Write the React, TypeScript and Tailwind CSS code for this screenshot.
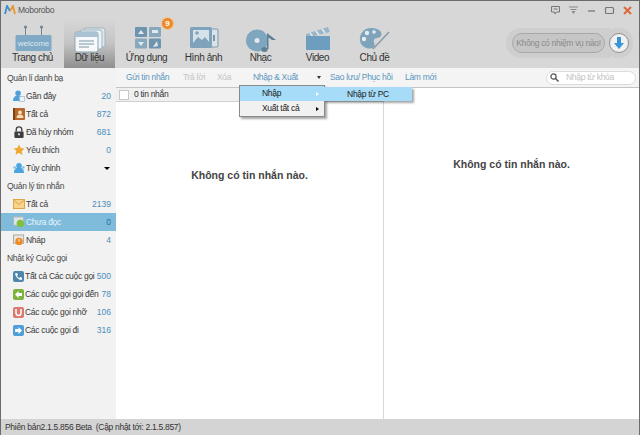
import React from "react";

const NavIcon = ({ name }: { name: string }) => {
  if (name === "home")
    return (
      <svg width="40" height="30" viewBox="0 0 40 30">
        <path d="M12.500 3v9M28.500 3v9" stroke="#6d8796" strokeWidth="1" />
        <circle cx="12.500" cy="4" r="1.600" fill="#6d8796" />
        <circle cx="28.500" cy="4" r="1.600" fill="#6d8796" />
        <rect x="2.500" y="12" width="36" height="16" rx="1.500" fill="#7fa9c4" />
        <text x="20.500" y="23" textAnchor="middle" fontSize="8" fill="#dce9f1" fontFamily="Liberation Sans">welcome</text>
      </svg>
    );
  if (name === "data")
    return (
      <svg width="38" height="30" viewBox="0 0 38 30">
        <rect x="13" y="5" width="21" height="19" rx="2" fill="#dfe8ee" stroke="#9fb3c1" />
        <rect x="9" y="7" width="22" height="19" rx="2" fill="#eef3f6" stroke="#9fb3c1" />
        <rect x="4" y="9" width="23" height="20" rx="2" fill="#f6f8fa" stroke="#8ea5b5" />
        <path d="M4 14v-3a2 2 0 0 1 2-2h19a2 2 0 0 1 2 2v3z" fill="#a9c3d4" />
        <path d="M8 18h15M8 21h15M8 24h10" stroke="#7d96a6" />
      </svg>
    );
  if (name === "apps")
    return (
      <svg width="38" height="30" viewBox="0 0 38 30">
        <rect x="7" y="4" width="12" height="10" rx="1" fill="#6f95ae" />
        <rect x="21" y="4" width="12" height="10" rx="1" fill="#88a8bd" />
        <rect x="7" y="15.500" width="12" height="10" rx="1" fill="#88a8bd" />
        <rect x="21" y="15.500" width="12" height="10" rx="1" fill="#6f95ae" />
        <path d="M10 11l3-4 3 4zM24 7h6v3h-6zM10 19h6l-3 4zM25 24l4-6 1 5z" fill="#dfe9ef" />
      </svg>
    );
  if (name === "photo")
    return (
      <svg width="38" height="30" viewBox="0 0 38 30">
        <rect x="25" y="6" width="8" height="18" rx="1" fill="#d9e2e8" stroke="#7f9bae" />
        <rect x="5" y="4" width="22" height="21" rx="1.500" fill="#7fa3bb" />
        <rect x="8" y="7" width="16" height="15" fill="#d6e2ea" />
        <path d="M8 20l5-6 4 3 3-3 4 5v3H8z" fill="#7fa3bb" />
        <circle cx="12" cy="10" r="1.800" fill="#7fa3bb" />
        <path d="M29 12v6" stroke="#5f7f93" strokeWidth="1.500" />
      </svg>
    );
  if (name === "music")
    return (
      <svg width="38" height="30" viewBox="0 0 38 30">
        <circle cx="15" cy="17.500" r="11" fill="#7fa6bf" />
        <circle cx="15" cy="17.500" r="2.500" fill="#e2eaef" />
        <ellipse cx="22.500" cy="26.500" rx="3.200" ry="2.500" fill="#5f7f93" />
        <path d="M25 26V10l9 7-4 0-3.500-2.500V26z" fill="#5f7f93" />
      </svg>
    );
  if (name === "video")
    return (
      <svg width="38" height="30" viewBox="0 0 38 30">
        <path d="M7 11L29 4l2 5-24 6z" fill="#9ab6c8" />
        <path d="M11 10l3 4M17 8l3 4M23 6l3 4" stroke="#e5ecf0" strokeWidth="1.500" />
        <rect x="7" y="13" width="24" height="14" fill="#6d9ec0" />
      </svg>
    );
  return (
    <svg width="38" height="30" viewBox="0 0 38 30">
      <path d="M15 5c8 0 12 4 10 8-2 3-6 1-7 4-1 3 2 4 0 7-3 3-12 2-14-6C3 11 8 5 15 5z" fill="#7fa3bb" />
      <circle cx="11" cy="10" r="2.200" fill="#e4ecf1" />
      <circle cx="18" cy="9" r="1.800" fill="#e4ecf1" />
      <circle cx="8" cy="16" r="2.200" fill="#e4ecf1" />
      <path d="M17 26L33 9" stroke="#8b9aa3" strokeWidth="1.500" />
    </svg>
  );
};

const navItems = [
  { label: "Trang chủ", icon: "home" },
  { label: "Dữ liệu", icon: "data", active: true },
  { label: "Ứng dụng", icon: "apps", badge: true },
  { label: "Hình ảnh", icon: "photo" },
  { label: "Nhạc", icon: "music" },
  { label: "Video", icon: "video" },
  { label: "Chủ đề", icon: "theme" },
];

const RowIcon = ({ kind }: { kind: string }) => {
  const box = "w-[11px] h-[11px] shrink-0 rounded-[2px] flex items-center justify-center";
  switch (kind) {
    case "recent":
      return (
        <svg width="12" height="12" viewBox="0 0 13 13" className="shrink-0">
          <circle cx="5.500" cy="3.500" r="3" fill="#4f9fdc" />
          <path d="M0 12c0-4 2-6 5.500-6S11 8 11 12z" fill="#4f9fdc" />
          <rect x="7" y="7" width="5.500" height="5.500" fill="#eef4f8" stroke="#8fb2c9" strokeWidth=".7" />
        </svg>
      );
    case "book":
      return (
        <svg width="12" height="12" viewBox="0 0 12 12" className="shrink-0">
          <rect width="12" height="12" rx="1" fill="#b8672a" />
          <rect x="0" width="2" height="12" fill="#7d4316" />
          <circle cx="7" cy="4.500" r="2" fill="#f6dcb6" />
          <path d="M3.500 10c0-2.500 1.500-3.500 3.500-3.500s3.500 1 3.500 3.500z" fill="#f6dcb6" />
        </svg>
      );
    case "lock":
      return (
        <svg width="12" height="12" viewBox="0 0 13 13" className="shrink-0">
          <path d="M3.500 6V4a3 3 0 0 1 6 0v2" fill="none" stroke="#444" strokeWidth="1.500" />
          <rect x="1.500" y="6" width="10" height="7" rx="1" fill="#3d3d3d" />
          <circle cx="6.500" cy="9" r="1.200" fill="#ddd" />
        </svg>
      );
    case "star":
      return (
        <svg width="12" height="12" viewBox="0 0 12 12" className="shrink-0">
          <path d="M6 .5l1.700 3.600 3.900.5-2.900 2.700.8 3.900L6 8.800l-3.500 1.900.8-3.900L.4 4.600l3.900-.5z" fill="#f0a830" />
        </svg>
      );
    case "custom":
      return (
        <svg width="12" height="12" viewBox="0 0 13 13" className="shrink-0">
          <circle cx="6.500" cy="4" r="3" fill="#4aa5e0" />
          <path d="M1 12c0-4 2-6 5.500-6S12 8 12 12z" fill="#4aa5e0" />
          <circle cx="1.800" cy="6" r="1.400" fill="#7fbde6" />
          <circle cx="11.200" cy="6" r="1.400" fill="#7fbde6" />
        </svg>
      );
    case "mail":
      return (
        <svg width="12" height="10" viewBox="0 0 13 11" className="shrink-0">
          <rect x=".5" y=".5" width="12" height="10" fill="#f6d48a" stroke="#dd9f3a" />
          <path d="M.5 1l6 5 6-5" fill="none" stroke="#dd9f3a" />
        </svg>
      );
    case "unread":
      return (
        <svg width="12" height="12" viewBox="0 0 13 12" className="shrink-0">
          <rect x=".5" y=".5" width="11" height="9" fill="#dbe3e6" stroke="#a9b6bb" />
          <circle cx="8" cy="7.500" r="4" fill="#7fc13c" />
        </svg>
      );
    case "draft":
      return (
        <svg width="12" height="12" viewBox="0 0 13 12" className="shrink-0">
          <rect x=".5" y=".5" width="11" height="9" fill="#e8e4de" stroke="#a9a49c" />
          <circle cx="6.500" cy="7.500" r="4" fill="#ee8a22" />
          <rect x="6" y="5" width="1" height="3" fill="#fff" />
        </svg>
      );
    case "all":
      return (
        <div className={`${box} bg-[#4d87ad]`}>
          <svg width="9" height="9" viewBox="0 0 8 8">
            <path d="M1 1c0 3 3 6 6 6V5L5.500 4.500 4.500 5.500 2.500 3.500 3.500 2.500 3 1z" fill="#fff" />
          </svg>
        </div>
      );
    case "in":
      return (
        <div className={`${box} bg-[#7db53c]`}>
          <svg width="9" height="9" viewBox="0 0 9 9"><path d="M1 4.500L4.500 1v2H8v3H4.500v2z" fill="#fff" /></svg>
        </div>
      );
    case "miss":
      return (
        <div className={`${box} bg-[#d9796f]`}>
          <svg width="9" height="9" viewBox="0 0 9 9"><path d="M2 1v4a2.500 2.500 0 0 0 5 0V1" fill="none" stroke="#fff" strokeWidth="1.500" /></svg>
        </div>
      );
    default:
      return (
        <div className={`${box} bg-[#4d9ed9]`}>
          <svg width="9" height="9" viewBox="0 0 9 9"><path d="M8 4.500L4.500 1v2H1v3h3.500v2z" fill="#fff" /></svg>
        </div>
      );
  }
};

const Section = ({ title }: { title: string }) => (
  <div className="h-[18px] flex items-center pl-[6px] text-[8.5px] tracking-[-0.3px] text-[#4a4a4a]">{title}</div>
);

const Row = ({ icon, label, count, active, caret }: { icon: string; label: string; count?: string; active?: boolean; caret?: boolean }) => (
  <div className={`h-[18px] flex items-center pl-[12px] pr-[5px] gap-[1px] ${active ? "bg-[#7fbcdc]" : ""}`}>
    <RowIcon kind={icon} />
    <span className={`text-[8.5px] tracking-[-0.3px] flex-1 whitespace-nowrap ${active ? "text-[#e6f4fb]" : "text-[#3a3a3a]"}`}>{label}</span>
    {caret ? (
      <span className="mr-[1px] w-0 h-0 border-x-[3px] border-x-transparent border-t-[3px] border-t-black" />
    ) : (
      <span className={`text-[8.5px] ${active ? "text-[#1f6fa5]" : "text-[#4d8dbb]"}`}>{count}</span>
    )}
  </div>
);

const tools: [string, string, string][] = [
  ["Gửi tin nhắn", "text-[#5b97bd]", "w-[57px]"],
  ["Trả lời", "text-[#c4c4c4]", "w-[34px]"],
  ["Xóa", "text-[#c4c4c4]", "w-[36px]"],
  ["Nhập & Xuất", "text-[#5b97bd]", "w-[64px]"],
];

export default function App() {
  return (
    <div className="w-[640px] h-[435px] flex flex-col overflow-hidden border-t border-x border-[#6b6b6b] bg-white font-['Liberation_Sans',Arial,sans-serif]">
      <header className="h-[67px] shrink-0 flex flex-col bg-[#d7d7d7]">
        <div className="h-[18px] flex items-center pl-[3px] pr-[6px]">
          <svg width="12" height="10" viewBox="0 0 12 10">
            <path d="M1 9L3 1l3 5" fill="none" stroke="#3a8fd0" strokeWidth="1.800" />
            <path d="M6 6l3-5 2 8" fill="none" stroke="#e8962e" strokeWidth="1.800" />
          </svg>
          <span className="ml-[2px] text-[8.5px] tracking-[-0.25px] text-[#555]">Moborobo</span>
          <div className="ml-auto flex items-center gap-[7px]">
            <svg width="11" height="9" viewBox="0 0 11 9">
              <path d="M1.500.5h8v5.500h-3L5 8 4.500 6h-3z" fill="none" stroke="#777" />
              <path d="M3.500 3h4" stroke="#777" />
            </svg>
            <svg width="11" height="9" viewBox="0 0 11 9">
              <path d="M1 1h9M2.500 3.500h6" stroke="#888" />
              <path d="M3.500 5h4L5.500 8z" fill="#888" />
            </svg>
            <svg width="11" height="9" viewBox="0 0 11 9"><path d="M2 5h7" stroke="#777" strokeWidth="1.300" /></svg>
            <svg width="11" height="9" viewBox="0 0 11 9"><rect x="1.500" y="1.500" width="8" height="6" rx="1" fill="none" stroke="#777" strokeWidth="1.200" /></svg>
            <svg width="11" height="9" viewBox="0 0 11 9"><path d="M2 1l7 7M9 1L2 8" stroke="#e0673a" strokeWidth="2" /></svg>
          </div>
        </div>
        <div className="flex-1 flex items-stretch pl-[6px] gap-[6px]">
          {navItems.map((item) => (
            <div
              key={item.label}
              className={`relative w-[51px] flex flex-col items-center pt-[4px] ${item.active ? "bg-gradient-to-b from-[#d7d7d7] via-[#c4c4c4] to-[#8f8f8f]" : ""}`}
            >
              <NavIcon name={item.icon} />
              <span className="-mt-[1px] text-[10px] tracking-[-0.4px] leading-[12px] text-[#333] whitespace-nowrap">{item.label}</span>
              {item.badge && (
                <span className="absolute top-[-2px] left-[40px] w-[13px] h-[13px] rounded-full bg-[#ee8a2c] border border-[#f5c795] flex items-center justify-center text-[8px] leading-none font-bold text-white">9</span>
              )}
            </div>
          ))}
          <div className="ml-auto mr-[6px] mt-[9px] h-[30px] flex items-center">
            <div className="w-[105px] h-[30px] rounded-l-full bg-[#cecece] pl-[6px] flex items-center">
              <div className="w-[93px] h-[20px] rounded-full bg-[#c6c6c6] border border-[#a8a8a8] flex items-center justify-center text-[8.5px] tracking-[-0.32px] text-[#8a8a8a] whitespace-nowrap">Không có nhiệm vụ nào!</div>
            </div>
            <div className="w-[28px] h-[30px] -ml-[6px] rounded-full bg-[#cecece] flex items-center justify-center">
              <div className="w-[20px] h-[20px] rounded-full bg-[#f0f0f0] border border-[#8f8f8f] flex items-center justify-center">
                <svg width="10" height="12" viewBox="0 0 10 12"><path d="M3 0h4v6h3l-5 6-5-6h3z" fill="#3a94d8" /></svg>
              </div>
            </div>
          </div>
        </div>
      </header>

      <div className="flex-1 min-h-0 flex">
        <aside className="w-[115px] shrink-0 bg-[#f2f2f2] flex flex-col pt-[1px]">
          <Section title="Quản lí danh bạ" />
          <Row icon="recent" label="Gần đây" count="20" />
          <Row icon="book" label="Tất cả" count="872" />
          <Row icon="lock" label="Đã hủy nhóm" count="681" />
          <Row icon="star" label="Yêu thích" count="0" />
          <Row icon="custom" label="Tùy chỉnh" caret />
          <Section title="Quản lý tin nhắn" />
          <Row icon="mail" label="Tất cả" count="2139" />
          <Row icon="unread" label="Chưa đọc" count="0" active />
          <Row icon="draft" label="Nháp" count="4" />
          <Section title="Nhật ký Cuộc gọi" />
          <Row icon="all" label="Tất cả Các cuộc gọi" count="500" />
          <Row icon="in" label="Các cuộc gọi gọi đến" count="78" />
          <Row icon="miss" label="Các cuộc gọi nhỡ" count="106" />
          <Row icon="out" label="Các cuộc gọi đi" count="316" />
        </aside>

        <main className="relative flex-1 min-w-0 flex flex-col">
          <div className="h-[20px] shrink-0 flex items-center pl-[10px] pr-[3px] bg-[#f4f4f4] border-b border-[#c4c4c4] text-[8.5px] tracking-[-0.3px] whitespace-nowrap">
            {tools.map(([label, color, width]) => (
              <span key={label} className={`${color} ${width}`}>{label}</span>
            ))}
            <span className="w-0 h-0 border-x-[2.5px] border-x-transparent border-t-[3px] border-t-[#333]" />
            <span className="ml-[9px] w-[75px] text-[#5b97bd]">Sao lưu/ Phục hồi</span>
            <span className="text-[#5b97bd]">Làm mới</span>
            <div className="ml-auto w-[90px] h-[14px] rounded-full bg-white border border-[#dcdcdc] flex items-center pl-[3px] gap-[7px] text-[#c2c2c2]">
              <svg width="9" height="9" viewBox="0 0 9 9">
                <circle cx="3.500" cy="3.500" r="2.600" fill="none" stroke="#555" strokeWidth="1.200" />
                <path d="M5.500 5.500L8.500 8.500" stroke="#555" strokeWidth="1.500" />
              </svg>
              Nhập từ khóa
            </div>
          </div>
          <div className="flex-1 min-h-0 flex">
            <div className="w-[268px] shrink-0 flex flex-col border-r border-[#d8d8d8]">
              <div className="h-[14px] flex items-center pl-[3px] bg-[#f0f0f0] border-b border-[#d0d0d0] text-[8.5px] tracking-[-0.3px] text-[#333]">
                <span className="w-[10px] h-[10px] bg-white border border-[#c8c8c8] mr-[5px]" />
                0 tin nhắn
              </div>
              <div className="pt-[66px] text-center text-[10.5px] font-bold text-[#444]">Không có tin nhắn nào.</div>
            </div>
            <div className="flex-1 pt-[69px] text-center text-[10.5px] font-bold text-[#444]">Không có tin nhắn nào.</div>
          </div>

          <div className="absolute left-[123px] top-[17px] w-[86px] h-[32px] bg-[#f1f1f1] border border-[#8a8a8a] shadow-[2px_2px_2px_rgba(0,0,0,0.35)] text-[8.5px] tracking-[-0.3px] text-[#222]">
            <div className="h-[15px] flex items-center pl-[22px] pr-[5px] bg-[#a6dcf8]">
              <span className="flex-1">Nhập</span>
              <span className="w-0 h-0 border-y-[2.5px] border-y-transparent border-l-[3px] border-l-white" />
            </div>
            <div className="h-[15px] flex items-center pl-[22px] pr-[5px]">
              <span className="flex-1">Xuất tất cả</span>
              <span className="w-0 h-0 border-y-[2.5px] border-y-transparent border-l-[3px] border-l-black" />
            </div>
          </div>
          <div className="absolute left-[208px] top-[19px] w-[88px] h-[14px] flex items-center justify-center bg-[#a6dcf8] shadow-[2px_2px_2px_rgba(0,0,0,0.35)] text-[8.5px] tracking-[-0.3px] text-[#222]">Nhập từ PC</div>
        </main>
      </div>

      <footer className="h-[16px] shrink-0 flex items-center pl-[4px] bg-[#d4d4d4] text-[8.5px] tracking-[-0.3px] text-[#333] whitespace-pre">Phiên bản2.1.5.856 Beta  (Cập nhật tới: 2.1.5.857)</footer>
    </div>
  );
}
